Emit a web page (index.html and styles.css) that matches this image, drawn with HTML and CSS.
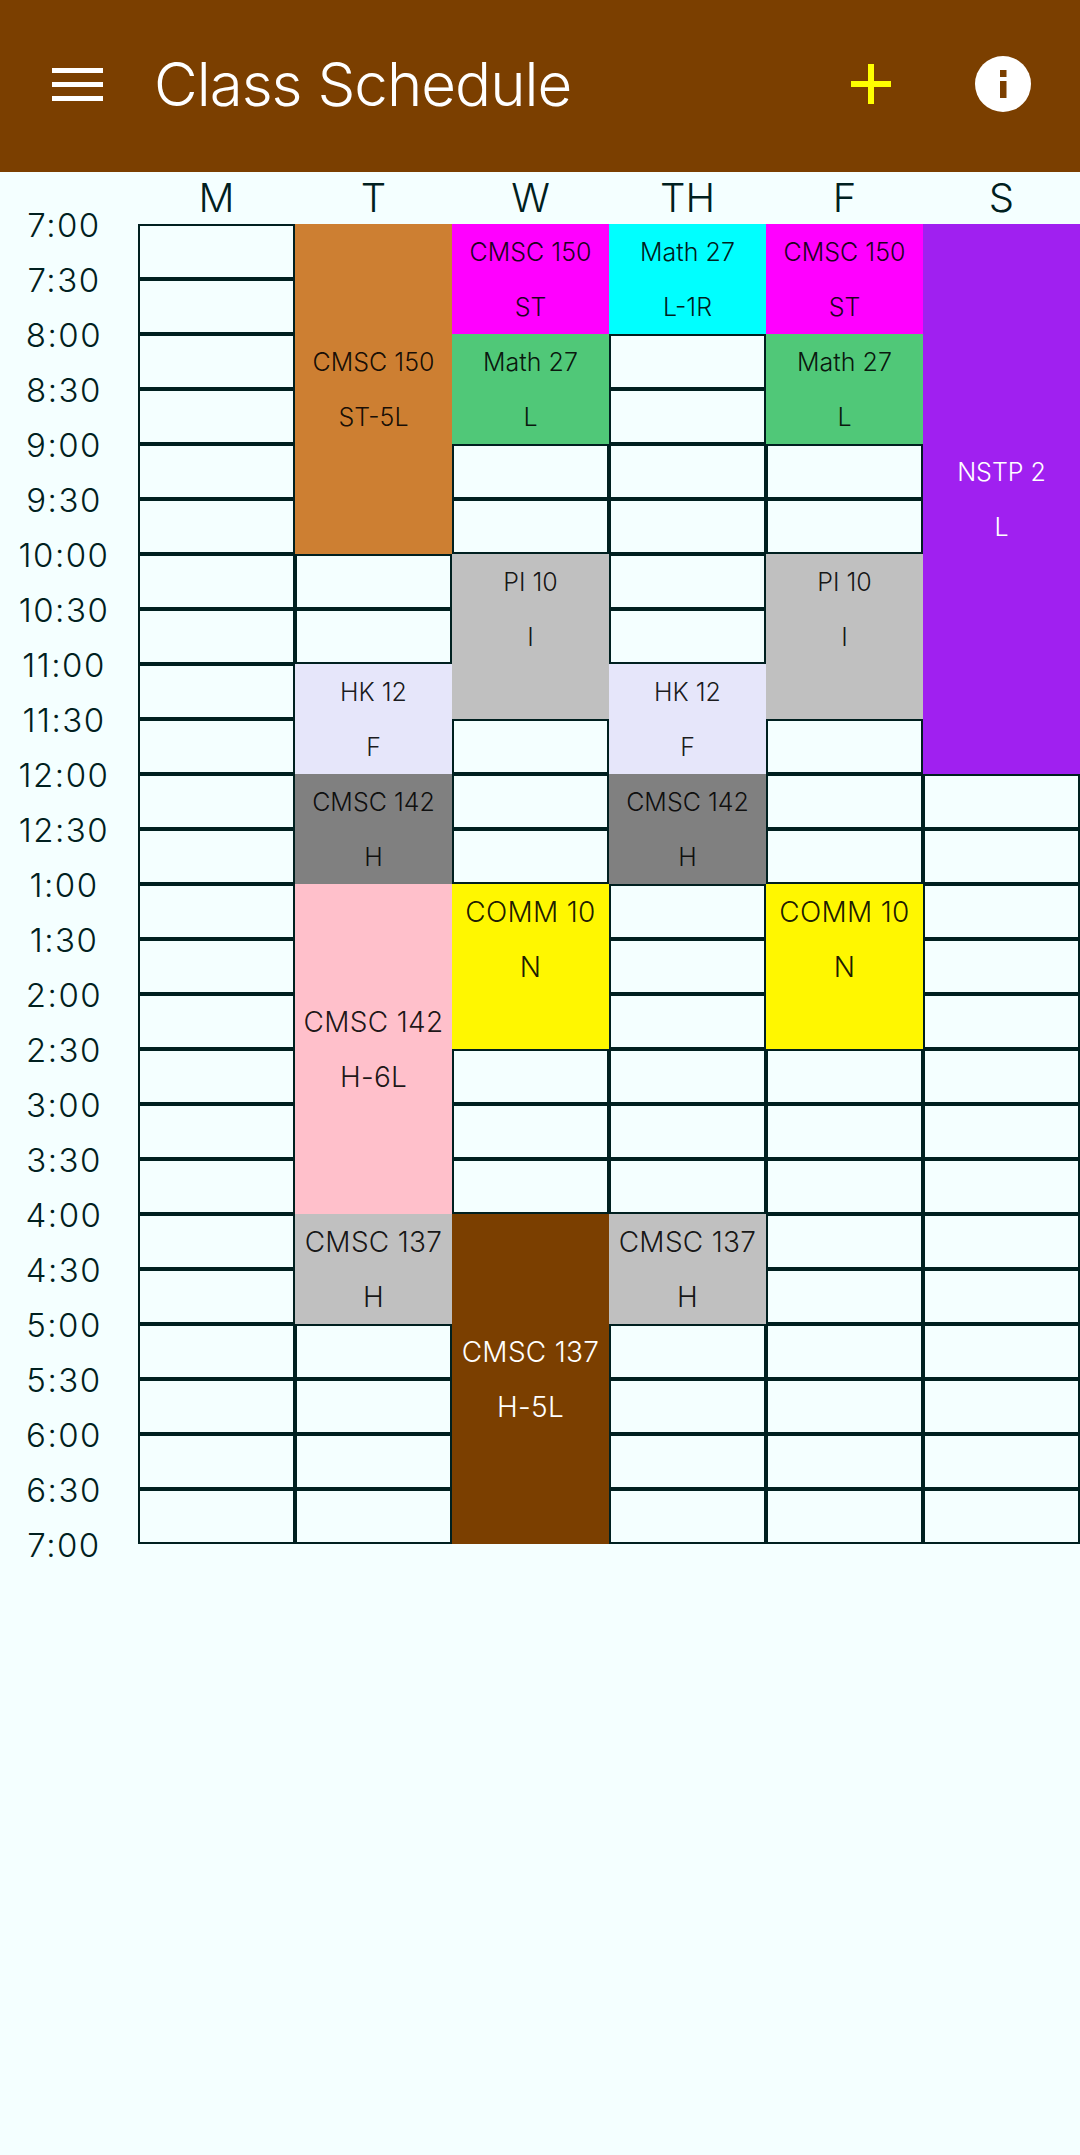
FILE: index.html
```html
<!DOCTYPE html>
<html lang="en">
<head>
    <meta charset="UTF-8">
    <meta name="viewport" content="width=device-width, initial-scale=1.0">
    <title>Class Schedule</title>
    <link rel="stylesheet" href="styles.css">
</head>
<body>
    <!-- Top bar -->
    <header class="app-bar">
        <svg class="icon-menu" viewBox="0 0 51 33"><path d="M0 0h51v5H0zM0 14h51v5H0zM0 28h51v5H0z" fill="#fff"/></svg>
        <h1 class="app-title">Class Schedule</h1>
        <svg class="icon-add" viewBox="0 0 40 40"><path d="M17 0h6v17h17v6H23v17h-6V23H0v-6h17z" fill="#ffff00"/></svg>
        <svg class="icon-info" viewBox="0 0 56 56"><circle cx="28" cy="28" r="28" fill="#fff"/><path d="M25 14h6.500v7H25zM25 25h6.500v17H25z" fill="#7b3f00"/></svg>
    </header>

    <main class="schedule">
        <div class="corner"></div>
        <div class="day-name">M</div>
        <div class="day-name">T</div>
        <div class="day-name">W</div>
        <div class="day-name">TH</div>
        <div class="day-name">F</div>
        <div class="day-name">S</div>

        <!-- Time labels -->
        <div class="times">
            <div>7:00</div><div>7:30</div><div>8:00</div><div>8:30</div><div>9:00</div><div>9:30</div>
            <div>10:00</div><div>10:30</div><div>11:00</div><div>11:30</div><div>12:00</div><div>12:30</div>
            <div>1:00</div><div>1:30</div><div>2:00</div><div>2:30</div><div>3:00</div><div>3:30</div>
            <div>4:00</div><div>4:30</div><div>5:00</div><div>5:30</div><div>6:00</div><div>6:30</div>
            <div>7:00</div>
        </div>

        <!-- Monday -->
        <div class="day">
            <div class="free"></div><div class="free"></div><div class="free"></div><div class="free"></div>
            <div class="free"></div><div class="free"></div><div class="free"></div><div class="free"></div>
            <div class="free"></div><div class="free"></div><div class="free"></div><div class="free"></div>
            <div class="free"></div><div class="free"></div><div class="free"></div><div class="free"></div>
            <div class="free"></div><div class="free"></div><div class="free"></div><div class="free"></div>
            <div class="free"></div><div class="free"></div><div class="free"></div><div class="free"></div>
        </div>

        <!-- Tuesday -->
        <div class="day">
            <div class="class span-6 bronze"><span>CMSC 150</span><span>ST-5L</span></div>
            <div class="free"></div><div class="free"></div>
            <div class="class span-2 lavender"><span>HK 12</span><span>F</span></div>
            <div class="class span-2 gray"><span>CMSC 142</span><span>H</span></div>
            <div class="class span-6 pink big"><span>CMSC 142</span><span>H-6L</span></div>
            <div class="class span-2 silver big"><span>CMSC 137</span><span>H</span></div>
            <div class="free"></div><div class="free"></div><div class="free"></div><div class="free"></div>
        </div>

        <!-- Wednesday -->
        <div class="day">
            <div class="class span-2 magenta"><span>CMSC 150</span><span>ST</span></div>
            <div class="class span-2 emerald"><span>Math 27</span><span>L</span></div>
            <div class="free"></div><div class="free"></div>
            <div class="class span-3 silver"><span>PI 10</span><span>I</span></div>
            <div class="free"></div><div class="free"></div><div class="free"></div>
            <div class="class span-3 yellow big"><span>COMM 10</span><span>N</span></div>
            <div class="free"></div><div class="free"></div><div class="free"></div>
            <div class="class span-6 brown big"><span>CMSC 137</span><span>H-5L</span></div>
        </div>

        <!-- Thursday -->
        <div class="day">
            <div class="class span-2 cyan"><span>Math 27</span><span>L-1R</span></div>
            <div class="free"></div><div class="free"></div><div class="free"></div>
            <div class="free"></div><div class="free"></div><div class="free"></div>
            <div class="class span-2 lavender"><span>HK 12</span><span>F</span></div>
            <div class="class span-2 gray"><span>CMSC 142</span><span>H</span></div>
            <div class="free"></div><div class="free"></div><div class="free"></div>
            <div class="free"></div><div class="free"></div><div class="free"></div>
            <div class="class span-2 silver big"><span>CMSC 137</span><span>H</span></div>
            <div class="free"></div><div class="free"></div><div class="free"></div><div class="free"></div>
        </div>

        <!-- Friday -->
        <div class="day">
            <div class="class span-2 magenta"><span>CMSC 150</span><span>ST</span></div>
            <div class="class span-2 emerald"><span>Math 27</span><span>L</span></div>
            <div class="free"></div><div class="free"></div>
            <div class="class span-3 silver"><span>PI 10</span><span>I</span></div>
            <div class="free"></div><div class="free"></div><div class="free"></div>
            <div class="class span-3 yellow big"><span>COMM 10</span><span>N</span></div>
            <div class="free"></div><div class="free"></div><div class="free"></div>
            <div class="free"></div><div class="free"></div><div class="free"></div>
            <div class="free"></div><div class="free"></div><div class="free"></div>
        </div>

        <!-- Saturday -->
        <div class="day">
            <div class="class span-10 purple"><span>NSTP 2</span><span>L</span></div>
            <div class="free"></div><div class="free"></div><div class="free"></div><div class="free"></div>
            <div class="free"></div><div class="free"></div><div class="free"></div><div class="free"></div>
            <div class="free"></div><div class="free"></div><div class="free"></div><div class="free"></div>
            <div class="free"></div><div class="free"></div>
        </div>
    </main>
</body>
</html>
```

FILE: styles.css
```css
body {
    background-color: #f4ffff;
    color: #002020;
    font-family: Inter, "Noto Sans", sans-serif;
    font-weight: 300;
    margin: 0;
    min-height: 2155px;
}

/* top bar */
.app-bar {
    background-color: #7b3f00;
    height: 172px;
    box-sizing: border-box;
    padding-bottom: 4px;
    display: flex;
    align-items: center;
}
.icon-menu {
    width: 51px;
    height: 33px;
    margin-left: 52px;
}
.app-title {
    color: #ffffff;
    font-size: 60px;
    font-weight: 300;
    letter-spacing: -1px;
    margin: 0 0 0 51px;
    flex: 1;
}
.icon-add {
    width: 40px;
    height: 40px;
    margin-right: 84px;
}
.icon-info {
    width: 56px;
    height: 56px;
    margin-right: 49px;
}

/* grid */
.schedule {
    display: grid;
    grid-template-columns: 138px repeat(6, 157px);
    grid-template-rows: 52px auto;
}
.day-name {
    font-size: 40px;
    text-align: center;
    line-height: 52px;
}
.times {
    margin-top: -27.5px;
    padding-right: 10px;
    font-size: 33px;
    letter-spacing: 1.5px;
    text-align: center;
}
.times div {
    padding-top: 2px;
    line-height: 53px;
}
.day {
    display: flex;
    flex-direction: column;
}
.free {
    height: 55px;
    border: 2px solid #002020;
    box-sizing: border-box;
}
.class {
    display: flex;
    flex-direction: column;
    justify-content: center;
    text-align: center;
    font-size: 25px;
    color: rgba(0, 0, 0, 0.9);
}
.class span {
    padding-top: 2px;
    line-height: 53px;
}
.big {
    font-size: 28px;
    letter-spacing: 0.3px;
}
.span-2 { height: 110px; }
.span-3 { height: 165px; justify-content: flex-start; }
.span-6 { height: 330px; }
.span-10 { height: 550px; }

.bronze { background-color: #cd7f32; }
.magenta { background-color: #ff00ff; }
.cyan { background-color: #00ffff; }
.emerald { background-color: #50c878; }
.silver { background-color: #c0c0c0; }
.lavender { background-color: #e6e6fa; }
.gray { background-color: #808080; }
.pink { background-color: #ffc0cb; }
.yellow { background-color: #fff700; }
.brown { background-color: #7b3f00; color: #ffffff; }
.purple { background-color: #a020f0; color: #ffffff; }
```
